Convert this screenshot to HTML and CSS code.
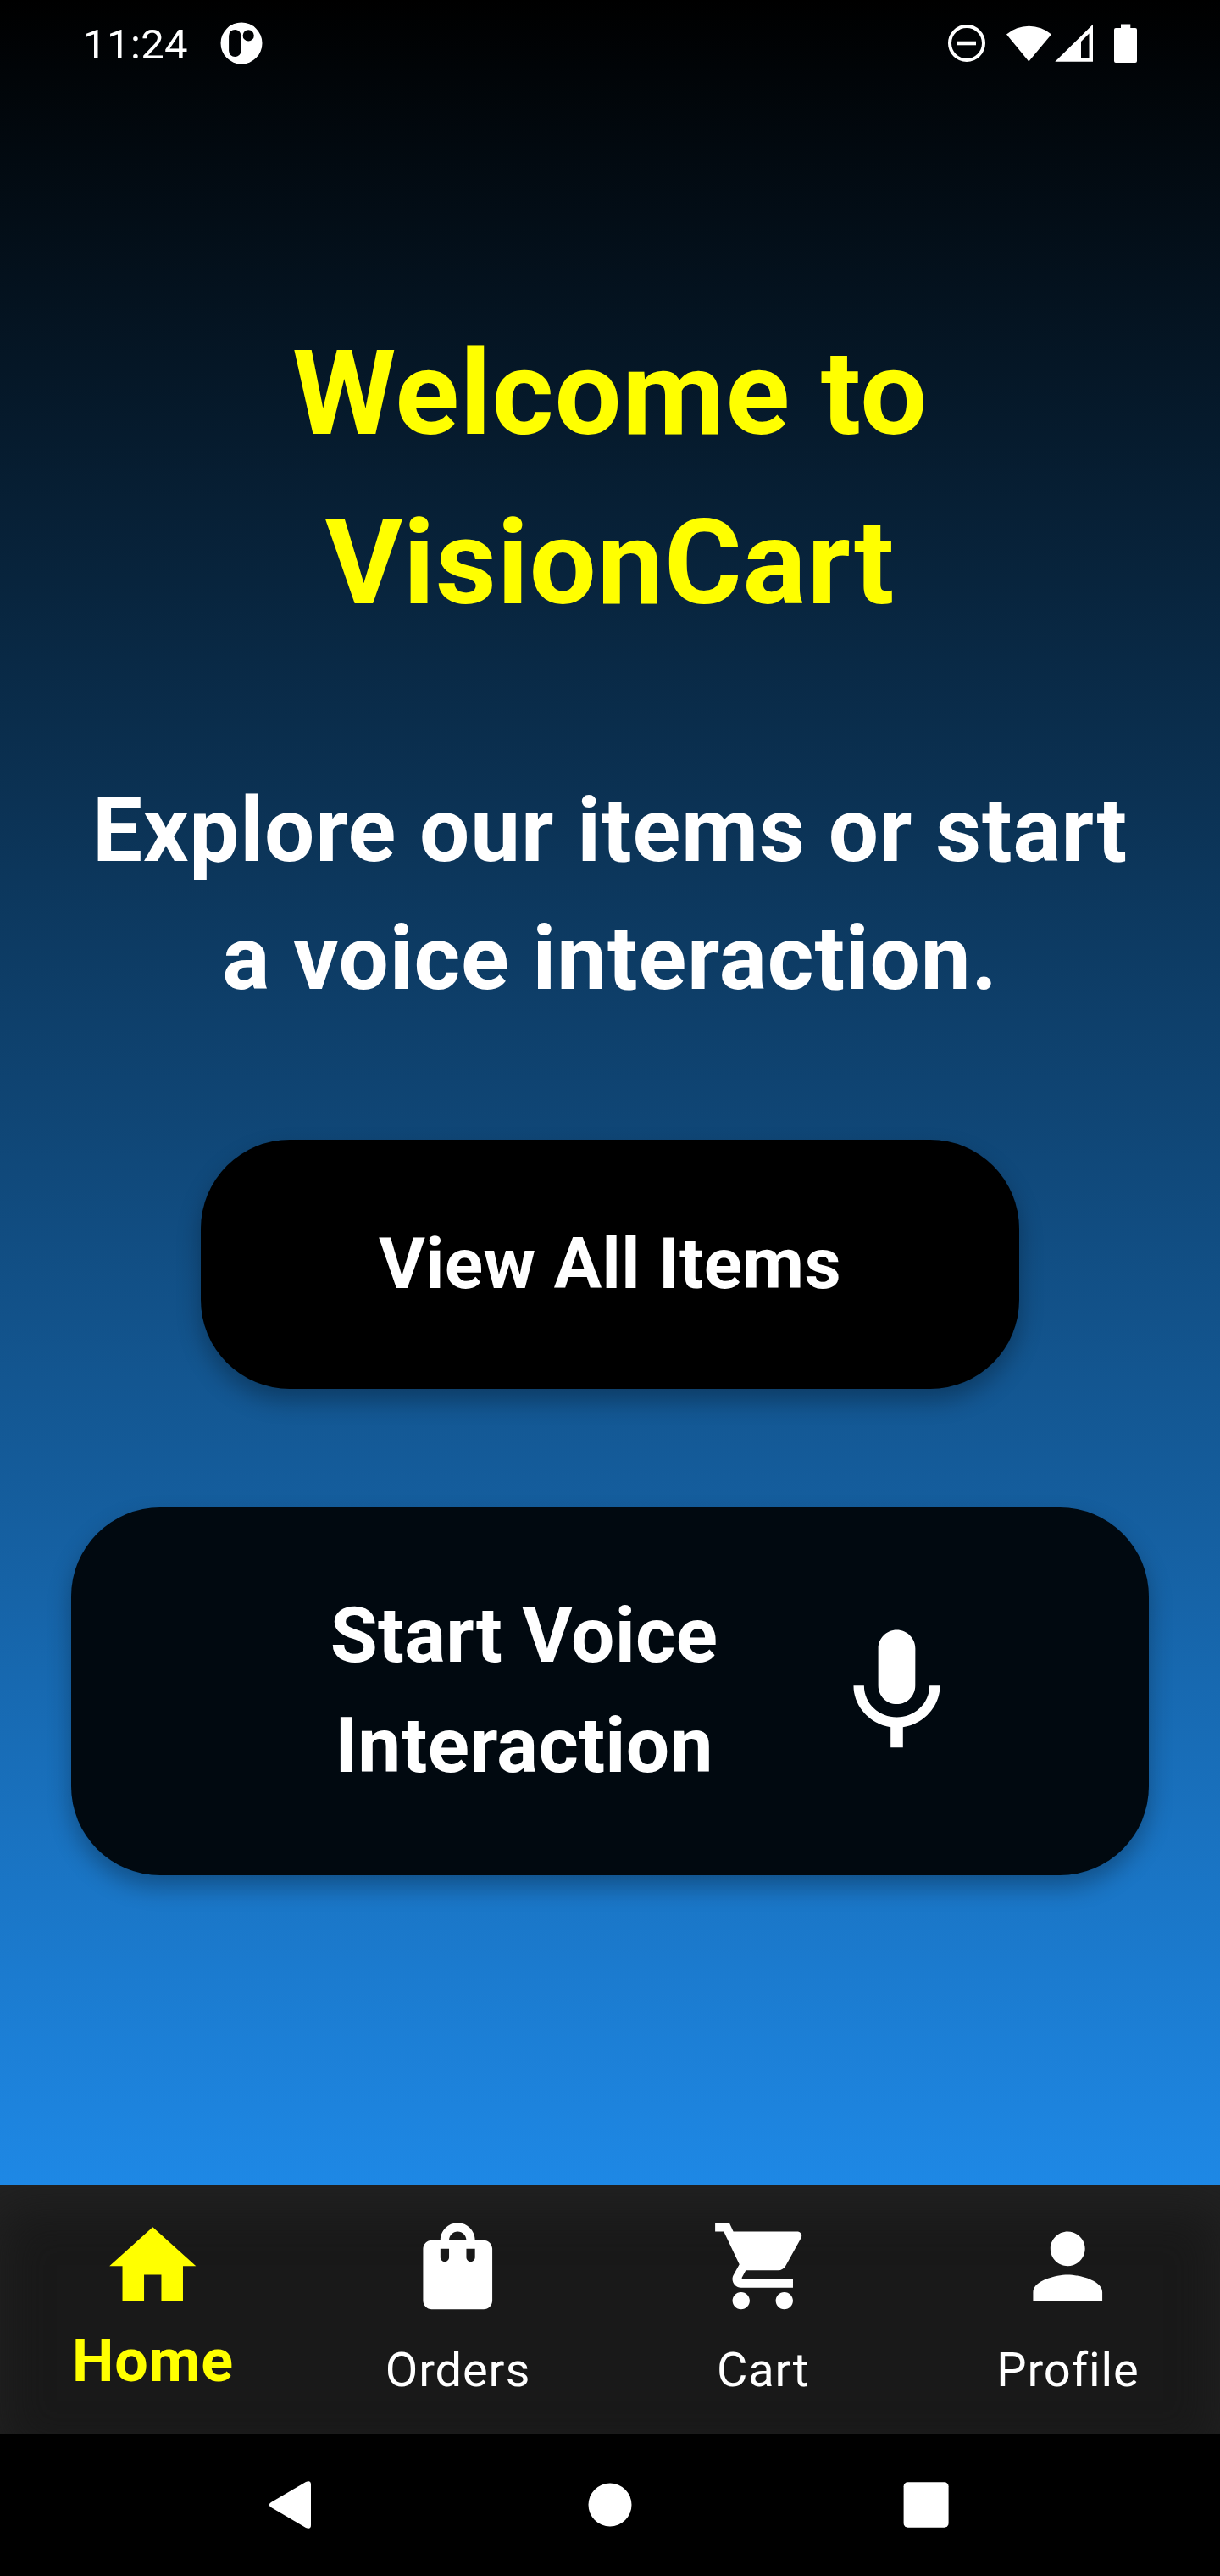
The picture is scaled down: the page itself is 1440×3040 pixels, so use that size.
FILE: index.html
```html
<!DOCTYPE html>
<html lang="en">
<head>
<meta charset="utf-8">
<title>VisionCart</title>
<link rel="stylesheet" href="styles.css">
</head>
<body>
<div class="screen">
  <main class="home">
    <header class="status">
      <div class="status-left">
        <span class="clock">11:24</span>
        <svg class="app-badge" viewBox="0 0 50 50"><path fill-rule="evenodd" d="M25 .5a24.500 24.500 0 1 0 0 49a24.500 24.500 0 1 0 0-49zM17.300 9a7.200 7.200 0 0 0-7.200 7.200v17.600a7.200 7.200 0 0 0 14.400 0V16.200A7.200 7.200 0 0 0 17.300 9zM33.200 9.300a6.600 6.600 0 1 0 0 13.200a6.600 6.600 0 1 0 0-13.200z"/></svg>
      </div>
      <svg class="status-icons" viewBox="0 0 230 50">
        <circle cx="25" cy="25" r="20" fill="none" stroke="#fff" stroke-width="4"/>
        <path d="M14 22.700h22v4.600H14z"/>
        <path d="M98.300 46.500 72 14.500a41 41 0 0 1 53 0z"/>
        <path fill-rule="evenodd" d="M129.300 46.800 174 2.800v44zM160 23v19.500h9.500V13.500z"/>
        <path d="M207 2.500h11.300V7H224a2 2 0 0 1 2 2v37a2 2 0 0 1-2 2h-23a2 2 0 0 1-2-2V9a2 2 0 0 1 2-2h6z"/>
      </svg>
    </header>
    <h1 class="title">Welcome to<br>VisionCart</h1>
    <p class="subtitle">Explore our items or start<br>a voice interaction.</p>
    <button class="btn btn-items">View All Items</button>
    <button class="btn btn-voice">
      <span class="voice-label">Start Voice<br>Interaction</span>
      <svg class="mic" viewBox="0 0 24 24"><path d="M12 14c1.660 0 2.990-1.340 2.990-3L15 5c0-1.660-1.340-3-3-3S9 3.340 9 5v6c0 1.660 1.340 3 3 3zm5.300-3c0 3-2.540 5.100-5.300 5.100S6.700 14 6.700 11H5c0 3.410 2.720 6.230 6 6.720V21h2v-3.280c3.280-.48 6-3.300 6-6.720h-1.700z"/></svg>
    </button>
  </main>
  <nav class="tabs">
    <a class="tab tab-active"><svg viewBox="0 0 24 24"><path d="M10 20v-6h4v6h5v-8h3L12 3 2 12h3v8z"/></svg><span>Home</span></a>
    <a class="tab"><svg viewBox="0 0 24 24"><path d="M18 6h-2c0-2.210-1.790-4-4-4S8 3.790 8 6H6c-1.100 0-2 .9-2 2v12c0 1.100.9 2 2 2h12c1.100 0 2-.9 2-2V8c0-1.100-.9-2-2-2zm-8 4c0 .55-.45 1-1 1s-1-.45-1-1V8h2v2zm2-6c1.100 0 2 .9 2 2h-4c0-1.100.9-2 2-2zm4 6c0 .55-.45 1-1 1s-1-.45-1-1V8h2v2z"/></svg><span>Orders</span></a>
    <a class="tab"><svg viewBox="0 0 24 24"><path d="M7 18c-1.100 0-1.990.9-1.990 2S5.900 22 7 22s2-.9 2-2-.9-2-2-2zM1 2v2h2l3.600 7.590-1.350 2.450c-.16.280-.25.610-.25.960 0 1.100.9 2 2 2h12v-2H7.420c-.14 0-.25-.11-.25-.25l.03-.12.900-1.630h7.450c.75 0 1.410-.41 1.750-1.030l3.580-6.490c.08-.14.120-.31.120-.48 0-.55-.45-1-1-1H5.210l-.94-2H1zm16 16c-1.100 0-1.990.9-1.990 2s.89 2 1.990 2 2-.9 2-2-.9-2-2-2z"/></svg><span>Cart</span></a>
    <a class="tab"><svg viewBox="0 0 24 24"><path d="M12 12c2.210 0 4-1.790 4-4s-1.790-4-4-4-4 1.790-4 4 1.790 4 4 4zm0 2c-2.670 0-8 1.340-8 4v2h16v-2c0-2.660-5.330-4-8-4z"/></svg><span>Profile</span></a>
  </nav>
  <footer class="sysnav">
    <svg viewBox="0 0 60 60"><path d="M7 27 48 3Q54 .5 54 6v48q0 5.500-6 3L7 33q-4.500-3 0-6z"/></svg>
    <svg viewBox="0 0 60 60"><circle cx="30" cy="30" r="25.500"/></svg>
    <svg viewBox="0 0 60 60"><rect x="-.4" y="3.200" width="53" height="53.600" rx="5"/></svg>
  </footer>
</div>
</body>
</html>
```
FILE: styles.css
```css
* { box-sizing: border-box; }

body {
  margin: 0;
  background: #000;
  font-family: Roboto, "Liberation Sans", sans-serif;
  color: #fff;
}

svg { display: block; fill: currentColor; overflow: visible; }

.screen {
  display: flex;
  flex-direction: column;
  width: 1440px;
  height: 3040px;
}

.home {
  display: flex;
  flex-direction: column;
  align-items: center;
  height: 2578px;
  background: linear-gradient(#000, #1e88e5);
}

.status {
  display: flex;
  justify-content: space-between;
  align-items: center;
  width: 100%;
  height: 102px;
  padding: 0 94px 0 98px;
}

.status-left { display: flex; align-items: center; gap: 38px; }
.clock { font-size: 49px; line-height: 58px; padding-top: 4px; letter-spacing: 0.4px; }
.app-badge { width: 50px; height: 50px; }
.status-icons { width: 230px; height: 50px; }

.title {
  margin: 262px 0 0;
  font-size: 140px;
  line-height: 200px;
  font-weight: 700;
  letter-spacing: 0.9px;
  text-align: center;
  color: #ff0;
}

.subtitle {
  margin: 141px 0 0;
  font-size: 105px;
  line-height: 151px;
  font-weight: 700;
  letter-spacing: 0.9px;
  text-align: center;
}

.btn {
  border: 0;
  border-radius: 105px;
  color: #fff;
  font-family: inherit;
  font-weight: 700;
  letter-spacing: 0.35px;
  box-shadow: 0 14px 28px rgba(0, 0, 0, 0.3);
}

.btn-items {
  width: 966px;
  height: 294px;
  margin-top: 138px;
  padding: 0 0 1px;
  background: #000;
  font-size: 84px;
}

.btn-voice {
  display: flex;
  align-items: center;
  justify-content: center;
  gap: 124px;
  width: 1272px;
  height: 434px;
  margin-top: 140px;
  padding: 0 0 0 96px;
  background: #010910;
  font-size: 91px;
  line-height: 130px;
}

.voice-label { padding-bottom: 2px; }
.mic { width: 175px; height: 175px; }

.tabs {
  display: grid;
  grid-template-columns: repeat(4, 1fr);
  height: 294px;
  background: #191919;
  box-shadow: inset 0 28px 56px #222;
}

.tab {
  display: flex;
  flex-direction: column;
  align-items: center;
  justify-content: space-between;
  padding: 35px 0 37px;
  font-size: 56px;
  line-height: 80px;
  letter-spacing: 0.9px;
}
.tab svg { width: 122.5px; height: 122.5px; }
.tab span { padding-left: 1px; }

.tab-active {
  padding-bottom: 38px;
  color: #ff0;
  font-size: 70px;
  line-height: 100px;
  font-weight: 700;
}

.sysnav {
  display: flex;
  justify-content: space-between;
  align-items: center;
  height: 168px;
  padding: 0 313px;
}
.sysnav svg { width: 60px; height: 60px; }
```
